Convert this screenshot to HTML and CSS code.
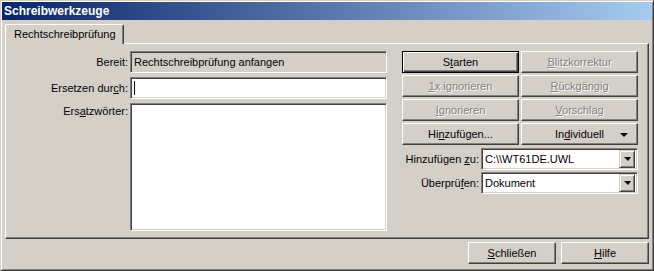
FILE: index.html
```html
<!DOCTYPE html>
<html>
<head>
  <title>Schreibwerkzeuge</title>
  <link rel="stylesheet" href="styles.css">
</head>
<body>
  <div class="window">
    <div class="titlebar">Schreibwerkzeuge</div>

    <div class="content">
      <div class="tabs">
        <div class="tab selected">Rechtschreibprüfung</div>
      </div>

      <div class="panel">
        <div class="fields">
          <label class="label">Bereit:</label>
          <div class="field readonly">Rechtschreibprüfung anfangen</div>

          <label class="label">Ersetzen dur<u>c</u>h:</label>
          <div class="field"><span class="caret"></span></div>

          <label class="label top">Ers<u>a</u>tzwörter:</label>
          <div class="field list"></div>
        </div>

        <div class="actions">
          <div class="buttons">
            <button class="btn default">S<u>t</u>arten</button>
            <button class="btn" disabled><u>B</u>litzkorrektur</button>
            <button class="btn" disabled><u>1</u>x ignorieren</button>
            <button class="btn" disabled><u>R</u>ückgängig</button>
            <button class="btn" disabled><u>I</u>gnorieren</button>
            <button class="btn" disabled><u>V</u>orschlag</button>
            <button class="btn">Hi<u>n</u>zufügen...</button>
            <button class="btn menu">In<u>d</u>ividuell <span class="arrow"></span></button>
          </div>

          <div class="combos">
            <label class="label">Hinzufügen <u>z</u>u:</label>
            <div class="field combo">
              <span class="value">C:\\WT61DE.UWL</span>
              <span class="drop"><span class="arrow"></span></span>
            </div>

            <label class="label">Überprü<u>f</u>en:</label>
            <div class="field combo">
              <span class="value">Dokument</span>
              <span class="drop"><span class="arrow"></span></span>
            </div>
          </div>
        </div>
      </div>

      <div class="footer">
        <button class="btn wide"><u>S</u>chließen</button>
        <button class="btn wide"><u>H</u>ilfe</button>
      </div>
    </div>
  </div>
</body>
</html>
```

FILE: styles.css
```css
body {
  margin: 0;
  background-color: #d4d0c8;
  font-family: "Liberation Sans", Arial, sans-serif;
  font-size: 11px;
  color: #000;
}

.window {
  box-sizing: border-box;
  width: 654px;
  height: 271px;
  padding: 1px;
  background-color: #d4d0c8;
  border: 1px solid;
  border-color: #d4d0c8 #404040 #404040 #d4d0c8;
  box-shadow: inset 1px 1px #fff, inset -1px -1px #808080;
}

.titlebar {
  height: 18px;
  line-height: 18px;
  padding-left: 2px;
  color: #fff;
  font-weight: bold;
  font-size: 12px;
  font-family: "Liberation Sans", Arial, sans-serif;
  background: linear-gradient(to right, #0a246a, #a6caf0);
}

.content {
  padding: 4px 3px 0 3px;
}

/* tab strip */
.tabs {
  display: flex;
  height: 19px;
}

.tab {
  box-sizing: border-box;
  height: 20px;
  padding: 0 7px 0 8px;
  line-height: 18px;
  border: 1px solid #fff;
  border-right-color: #404040;
  border-bottom: none;
  border-radius: 2px 2px 0 0;
  box-shadow: inset -1px 0 #808080;
  background-color: #d4d0c8;
}

.tab.selected {
  position: relative;
  z-index: 1;
}

.panel {
  box-sizing: border-box;
  height: 196px;
  display: flex;
  padding: 7px 0 0 0;
  border: 1px solid;
  border-color: #fff #404040 #404040 #fff;
  box-shadow: inset -1px -1px #808080;
}

/* left column */
.fields {
  display: grid;
  grid-template-columns: 122px 257px;
  grid-template-rows: 22px 22px 128px;
  column-gap: 2px;
  row-gap: 4px;
}

.label {
  display: block;
  text-align: right;
  line-height: 22px;
  white-space: nowrap;
}

.label.top {
  line-height: 14px;
  padding-top: 1px;
}

.field {
  box-sizing: border-box;
  position: relative;
  display: flex;
  align-items: center;
  padding-left: 3px;
  background-color: #fff;
  border: 1px solid;
  border-color: #808080 #fff #fff #808080;
  box-shadow: inset 1px 1px #404040, inset -1px -1px #d4d0c8;
}

.field.readonly {
  background-color: #d4d0c8;
}

.field.list {
  align-items: flex-start;
}

.caret {
  width: 1px;
  height: 14px;
  background-color: #000;
}

/* right column */
.actions {
  margin-left: 15px;
  width: 236px;
}

.buttons {
  display: grid;
  grid-template-columns: 117px 117px;
  grid-auto-rows: 22px;
  gap: 2px;
}

.btn {
  box-sizing: border-box;
  position: relative;
  margin: 0;
  padding: 0;
  font-family: inherit;
  font-size: 11px;
  color: #000;
  background-color: #d4d0c8;
  border: 1px solid;
  border-color: #fff #404040 #404040 #fff;
  box-shadow: inset -1px -1px #808080;
}

.btn.default {
  border-color: #000;
  box-shadow: inset 1px 1px #fff, inset -1px -1px #404040, inset -2px -2px #808080;
}

.btn:disabled {
  color: #808080;
  text-shadow: 1px 1px #fff;
}

.btn.menu .arrow {
  position: absolute;
  right: 9px;
  top: 9px;
}

.arrow {
  display: inline-block;
  width: 0;
  height: 0;
  border-left: 4px solid transparent;
  border-right: 4px solid transparent;
  border-top: 4px solid #000;
}

.combos {
  display: grid;
  grid-template-columns: 77px 157px;
  grid-auto-rows: 22px;
  column-gap: 2px;
  row-gap: 2px;
  margin-top: 3px;
}

.combo .value {
  flex: 1;
}

.drop {
  box-sizing: border-box;
  display: flex;
  align-items: center;
  justify-content: center;
  width: 16px;
  height: 18px;
  margin-right: 2px;
  background-color: #d4d0c8;
  border: 1px solid;
  border-color: #d4d0c8 #404040 #404040 #d4d0c8;
  box-shadow: inset 1px 1px #fff, inset -1px -1px #808080;
}

.drop .arrow {
  border-left-width: 4px;
  border-right-width: 3px;
}

.footer {
  display: flex;
  justify-content: flex-end;
  gap: 5px;
  padding-top: 3px;
}

.btn.wide {
  width: 88px;
  height: 22px;
}
```
